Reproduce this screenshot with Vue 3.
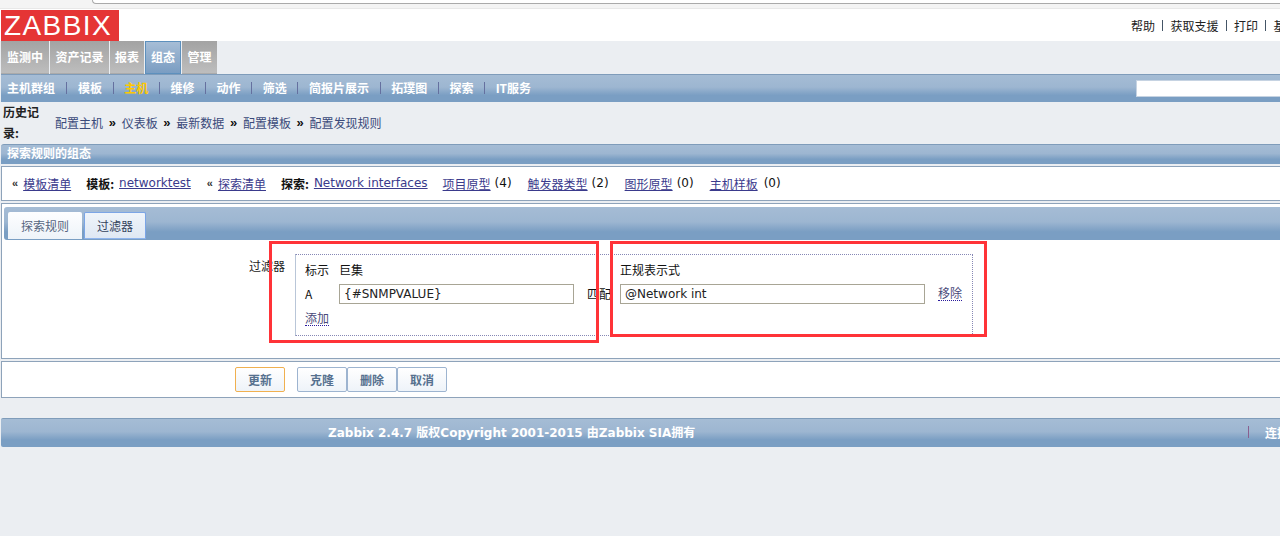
<script setup>
const mainTabs = [
  { label: '监测中', w: 48 }, { label: '资产记录', w: 59 }, { label: '报表', w: 34 },
  { label: '组态', w: 36, active: true }, { label: '管理', w: 35 }
]
const subNav = [
  { label: '主机群组' }, { label: '模板' }, { label: '主机', active: true }, { label: '维修' },
  { label: '动作' }, { label: '筛选' }, { label: '简报片展示' }, { label: '拓璞图' },
  { label: '探索' }, { label: 'IT服务' }
]
const history = ['配置主机', '仪表板', '最新数据', '配置模板', '配置发现规则']
</script>

<template>
  <div class="page">
    <div class="chrome"><div class="url"></div></div>
    <header class="head">
      <div class="logo">ZABBIX</div>
      <nav class="toplinks">
        <span>帮助</span><i></i><span>获取支援</span><i></i><span>打印</span><i></i><span>基</span>
      </nav>
    </header>
    <div class="maintabs">
      <div v-for="t in mainTabs" :key="t.label" class="maintab" :class="{ on: t.active }" :style="{ width: t.w + 'px' }">{{ t.label }}</div>
    </div>
    <div class="subnav bar">
      <template v-for="(s, i) in subNav" :key="s.label">
        <i v-if="i" class="sep" :class="{ first: i === 1 }"></i>
        <span :class="{ cur: s.active }">{{ s.label }}</span>
      </template>
      <div class="search"></div>
    </div>
    <div class="history">
      <div class="hlabel">历史记录:</div>
      <div class="hlinks">
        <template v-for="(h, i) in history" :key="h">
          <b v-if="i" class="arrows">»</b><span>{{ h }}</span>
        </template>
      </div>
    </div>
    <div class="title bar">探索规则的组态</div>
    <div class="crumbs">
      <span class="q">«</span><a class="m1">模板清单</a>
      <strong class="g1">模板:</strong><a class="m2">networktest</a>
      <span class="q g2">«</span><a class="m1">探索清单</a>
      <strong class="g1">探索:</strong><a class="m2">Network interfaces</a>
      <a class="g3 g3a">项目原型</a><span class="n">(4)</span>
      <a class="g3">触发器类型</a><span class="n">(2)</span>
      <a class="g3">图形原型</a><span class="n">(0)</span>
      <a class="g3">主机样板</a><span class="n nl">(0)</span>
    </div>
    <section class="panel">
      <div class="tabhead bar">
        <div class="tab">探索规则</div>
        <div class="tab sel">过滤器</div>
      </div>
      <div class="form">
        <div class="flabel">过滤器</div>
        <div class="fbox">
          <div class="frow heads">
            <span class="c1">标示</span><span class="c2">巨集</span><span class="c3"></span><span>正规表示式</span>
          </div>
          <div class="frow vals">
            <span class="c1">A</span>
            <div class="inp i1">{#SNMPVALUE}</div>
            <span class="c3">匹配</span>
            <div class="inp i2">@Network int</div>
            <a class="dot rm">移除</a>
          </div>
          <div class="frow add"><a class="dot">添加</a></div>
        </div>
      </div>
    </section>
    <div class="actions">
      <button class="btn primary">更新</button>
      <div class="group">
        <button class="btn">克隆</button><button class="btn">删除</button><button class="btn">取消</button>
      </div>
    </div>
    <footer class="foot bar">
      <span class="copy">Zabbix 2.4.7 版权Copyright 2001-2015 由Zabbix SIA拥有</span>
      <i class="fsep"></i>
      <span class="conn">连接</span>
    </footer>
    <div class="mark m-a"></div>
    <div class="mark m-b"></div>
  </div>
</template>

<style>
html, body { margin: 0; background: #ebeef2; overflow: hidden; }
</style>

<style scoped>
.page {
  position: relative;
  width: 1280px;
  height: 536px;
  overflow: hidden;
  background: #ebeef2;
  font: 12px "Noto Sans CJK SC", "Liberation Sans", sans-serif;
  color: #111;
}
.chrome { height: 9px; background: #f4f4f4; box-sizing: border-box; border-bottom: 1px solid #e8e8e8; padding-left: 92px; }
.url { height: 3px; border: 1px solid #aaa; border-top: 0; border-right: 0; border-radius: 0 0 0 4px; background: #fff; }
.head { height: 32px; background: #fff; display: flex; justify-content: space-between; padding-left: 1px; }
.logo {
  width: 118px; height: 31px; margin-top: 1px; background: #e53535; color: #fff;
  font: 28px/32px "Liberation Sans", sans-serif; text-indent: 3px; letter-spacing: 1.4px; overflow: hidden; white-space: nowrap;
}
.toplinks { display: flex; align-items: center; width: 149px; margin-top: 1px; padding-bottom: 1px; white-space: nowrap; overflow: hidden; color: #222; flex: none; }
.toplinks i { width: 1px; height: 11px; background: #456; margin: 0 7.25px; flex: none; }
.maintabs { height: 33px; display: flex; padding-left: 1px; gap: 1px; }
.maintab {
  box-sizing: border-box; height: 33px; display: flex; align-items: center; justify-content: center; padding-bottom: 2px;
  background: linear-gradient(#a3a3a3, #bdbdbd); border-bottom: 1px solid #aaa;
  color: #fff; font-weight: 700;
}
.maintab.on { background: linear-gradient(#a6bdd6, #7a9dc2); border: 1px solid #5d90bd; }
.bar { background: linear-gradient(#a5bcd5 0%, #9db6d1 45%, #7a9ec3 75%, #7a9ec3 100%); }
.subnav {
  height: 28px; margin-left: 1px; box-sizing: border-box; border-top: 1px solid #7f9cba; padding-bottom: 2px;
  display: flex; align-items: center; padding-left: 6px; color: #fff; font-weight: 700; white-space: nowrap; position: relative;
}
.subnav .cur { color: #ffc800; }
.sep { width: 1px; height: 12px; background: #65709f; margin: 0 10.6px; flex: none; }
.sep.first { margin-left: 11.4px; }
.search { position: absolute; left: 1135px; top: 5px; width: 150px; height: 17px; background: #fff; border: 1px solid #c6d3e2; box-sizing: border-box; }
.history { height: 42px; box-sizing: border-box; padding: 0 0 2px 3px; display: flex; align-items: center; }
.hlabel { width: 40px; font-weight: 700; font-size: 12px; line-height: 21px; color: #222; }
.hlinks { margin-left: 12px; color: #3a4a7a; display: flex; align-items: center; white-space: nowrap; }
.arrows { margin: 0 5.7px; color: #111; font: 700 13px "Liberation Sans", sans-serif; }
.title {
  height: 20px; margin-left: 1px; box-sizing: border-box; border-top: 1px solid #7f9cba; border-radius: 3px 0 0 0;
  color: #fff; font-weight: 700; font-size: 12px; line-height: 16px; padding-left: 6px;
}
.crumbs {
  margin: 2px 0 0 1px; height: 35px; box-sizing: border-box; background: #fff; border: 1px solid #8ea3ba; border-right: 0;
  display: flex; align-items: center; padding: 0 0 1px 10px; white-space: nowrap; color: #111;
}
a { color: #3a3a8c; text-decoration: underline; }
.crumbs a, .crumbs .n { font-family: "DejaVu Sans", "Noto Sans CJK SC", sans-serif; font-size: 12px; }
.q { margin-right: 5px; font-family: "Liberation Sans", sans-serif; font-weight: 700; font-size: 11px; color: #333; }
.g1 { margin-left: 15px; margin-right: 5px; font-weight: 700; }
.g2 { margin-left: 16px; }
.g3 { margin-left: 16px; }
.g3a { margin-left: 15px; }
.n { margin-left: 4px; }
.nl { margin-left: 6px; }
.m1, .m2 { display: inline-block; }
.panel {
  margin: 2px 0 0 1px; height: 156px; box-sizing: border-box; background: #fff;
  border: 1px solid #8ea3ba; border-right: 0; padding: 3px 0 0 2px;
}
.tabhead { height: 33px; display: flex; align-items: flex-end; padding: 0 0 1px 4px; gap: 2px; box-sizing: border-box; border-radius: 3px 0 0 3px; }
.tab {
  box-sizing: border-box; height: 27px; background: linear-gradient(#fdfeff, #eef3f9);
  color: #56657f; display: flex; align-items: center; justify-content: center; width: 74px; border-radius: 2px 2px 0 0;
}
.tab.sel { width: 62px; border: 1px solid #7ba5e6; border-bottom: 1px solid #8fb4ec; color: #33425c; background: linear-gradient(#eff4fa, #dfe8f3); }
.form { position: relative; padding: 14px 0 0 0; margin-left: -2px; display: flex; }
.flabel { width: 283px; text-align: right; margin-top: 3px; color: #222; flex: none; }
.fbox {
  margin-left: 10px; width: 678px; height: 82px; box-sizing: border-box;
  border: 1px dotted #8688b5; border-left: 1px solid #b9c6d8; border-bottom: 1px dotted #8688b5;
  padding: 5px 0 0 9px;
}
.frow { display: flex; align-items: center; white-space: nowrap; }
.heads { height: 18px; }
.c1 { width: 34px; flex: none; }
.c2 { width: 234px; flex: none; }
.c3 { width: 46px; flex: none; padding-left: 13px; box-sizing: border-box; }
.c2 + .c3 { width: 47px; }
.vals { height: 21px; margin-top: 5px; }
.inp {
  box-sizing: border-box; height: 20px; border: 1px solid #a8a595; background: #fff;
  font: 12px/18px "DejaVu Sans", sans-serif; padding-left: 4px; color: #222; flex: none;
}
.i1 { width: 235px; }
.i2 { width: 305px; }
.rm { margin-left: 13px; }
.add { height: 18px; margin-top: 5px; }
.dot { color: #4a4a7a; text-decoration: none; border-bottom: 1px dotted #2a1a9c; line-height: 14px; }
.actions {
  margin: 2px 0 0 1px; height: 37px; box-sizing: border-box; background: #fff; border: 1px solid #8ea3ba; border-right: 0;
  display: flex; align-items: center; padding: 0 0 0 233px;
}
.btn {
  box-sizing: border-box; height: 25px; width: 50px; border: 1px solid #9db4d0; background: linear-gradient(#ffffff, #eef3f9);
  font: 700 12px "Noto Sans CJK SC", sans-serif; color: #56718f; padding: 0; border-radius: 2px;
}
.btn.primary { border-color: #f0b050; }
.group { display: flex; margin-left: 12px; }
.foot {
  position: relative; margin: 20px 0 0 1px; height: 29px; box-sizing: border-box; border-top: 1px solid #7f9cba; border-radius: 2px 0 0 2px;
  color: #fff; font-weight: 700; font-size: 12px; line-height: 28px; white-space: nowrap;
}
.copy { position: absolute; left: 327px; top: 0; font-family: "DejaVu Sans", "Noto Sans CJK SC", sans-serif; font-size: 12px; }
.fsep { position: absolute; left: 1247px; top: 7px; width: 1px; height: 12px; background: #8a5f8f; }
.conn { position: absolute; left: 1264px; top: 0; }
.mark { position: absolute; border: 3px solid #ff3338; box-sizing: border-box; }
.m-a { left: 269px; top: 241px; width: 330px; height: 102px; }
.m-b { left: 610px; top: 241px; width: 377px; height: 96px; }
</style>
